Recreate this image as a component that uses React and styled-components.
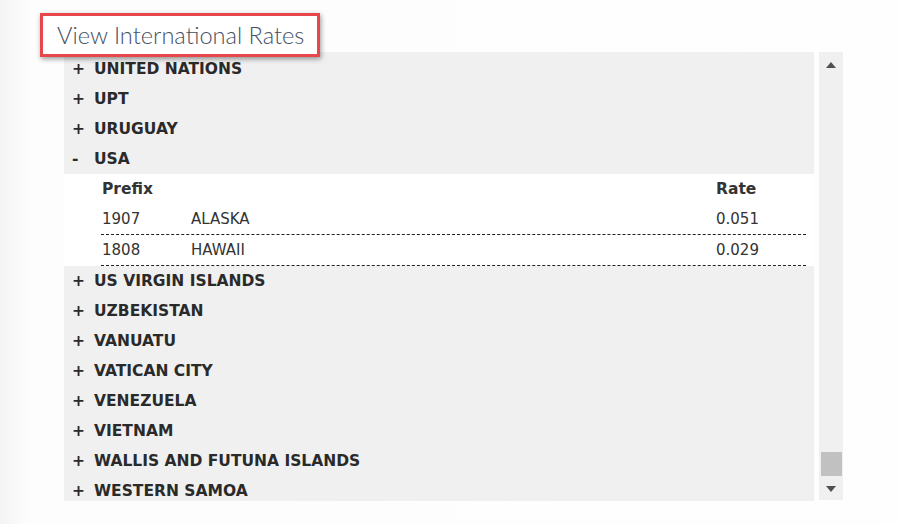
import React from 'react';
import styled, { createGlobalStyle } from 'styled-components';

const GlobalStyle = createGlobalStyle`
  html, body {
    margin: 0;
    padding: 0;
    background: linear-gradient(to right, #f4f4f4 0px, #fdfdfd 30px, #fefefe 100%);
    font-family: "DejaVu Sans", sans-serif;
    color: #333;
  }
`;

const Page = styled.div`
  width: 900px;
  height: 524px;
  padding: 13px 0 0 40px;
  box-sizing: border-box;
  overflow: hidden;
`;

const TitleBox = styled.div`
  position: relative;
  z-index: 2;
  width: 280px;
  height: 44px;
  box-sizing: border-box;
  border: 3px solid #e8464b;
  background: #fff;
  box-shadow: 1px 2px 5px rgba(0, 0, 0, 0.4);
  margin-bottom: -5px;
  display: flex;
  align-items: center;
  padding-left: 14px;
  font-family: Lato, "Open Sans", sans-serif;
  font-weight: 300;
  font-size: 23.6px;
  color: #465064;
`;

const Frame = styled.div`
  display: flex;
  gap: 5px;
  margin-left: 24px;
`;

const List = styled.div`
  width: 750px;
  height: 449px;
  overflow: hidden;
  background: #f0f0f0;
  padding-top: 2px;
  box-sizing: border-box;
`;

const CountryRow = styled.div`
  height: 30px;
  display: flex;
  align-items: center;
  font-weight: bold;
  font-size: 15.5px;
  color: #2a2a2a;
`;

const Toggle = styled.span`
  width: 30px;
  padding-left: 8px;
  box-sizing: border-box;
`;

const Expanded = styled.div`
  background: #fff;
  padding: 0 8px 0 37px;
`;

const RateRow = styled.div`
  height: 30px;
  display: grid;
  grid-template-columns: 89px 1fr 90px;
  align-items: center;
  font-size: ${p => (p.head ? '15.5px' : '15px')};
  font-weight: ${p => (p.head ? 'bold' : 'normal')};
  border-bottom: ${p => (p.head ? 'none' : '1px dashed #222')};
  padding-left: 1px;
  color: #333;
`;

const Scrollbar = styled.div`
  width: 24px;
  height: 448px;
  background: #f0f0f0;
  display: flex;
  flex-direction: column;
  align-items: center;
  justify-content: space-between;
  padding: 10px 0 8px;
  box-sizing: border-box;
`;

const Arrow = styled.div`
  width: 0;
  height: 0;
  border-left: 5px solid transparent;
  border-right: 5px solid transparent;
  ${p => (p.down ? 'border-top: 6px solid #505050;' : 'border-bottom: 6px solid #505050;')}
`;

const Track = styled.div`
  flex: 1;
  width: 100%;
  display: flex;
  flex-direction: column;
  justify-content: flex-end;
  align-items: center;
  padding-bottom: 10px;
`;

const Thumb = styled.div`
  width: 21px;
  height: 24px;
  background: #c1c1c1;
`;

const before = ['UNITED NATIONS', 'UPT', 'URUGUAY'];
const after = [
  'US VIRGIN ISLANDS',
  'UZBEKISTAN',
  'VANUATU',
  'VATICAN CITY',
  'VENEZUELA',
  'VIETNAM',
  'WALLIS AND FUTUNA ISLANDS',
  'WESTERN SAMOA',
];
const rates = [
  { prefix: '1907', name: 'ALASKA', rate: '0.051' },
  { prefix: '1808', name: 'HAWAII', rate: '0.029' },
];

const App = () => (
  <>
    <GlobalStyle />
    <Page>
      <TitleBox>View International Rates</TitleBox>
      <Frame>
        <List>
          {before.map(c => (
            <CountryRow key={c}>
              <Toggle>+</Toggle>
              {c}
            </CountryRow>
          ))}
          <CountryRow>
            <Toggle>-</Toggle>
            USA
          </CountryRow>
          <Expanded>
            <RateRow head>
              <span>Prefix</span>
              <span />
              <span>Rate</span>
            </RateRow>
            {rates.map(r => (
              <RateRow key={r.prefix}>
                <span>{r.prefix}</span>
                <span>{r.name}</span>
                <span>{r.rate}</span>
              </RateRow>
            ))}
          </Expanded>
          {after.map(c => (
            <CountryRow key={c}>
              <Toggle>+</Toggle>
              {c}
            </CountryRow>
          ))}
        </List>
        <Scrollbar>
          <Arrow />
          <Track>
            <Thumb />
          </Track>
          <Arrow down />
        </Scrollbar>
      </Frame>
    </Page>
  </>
);

export default App;
